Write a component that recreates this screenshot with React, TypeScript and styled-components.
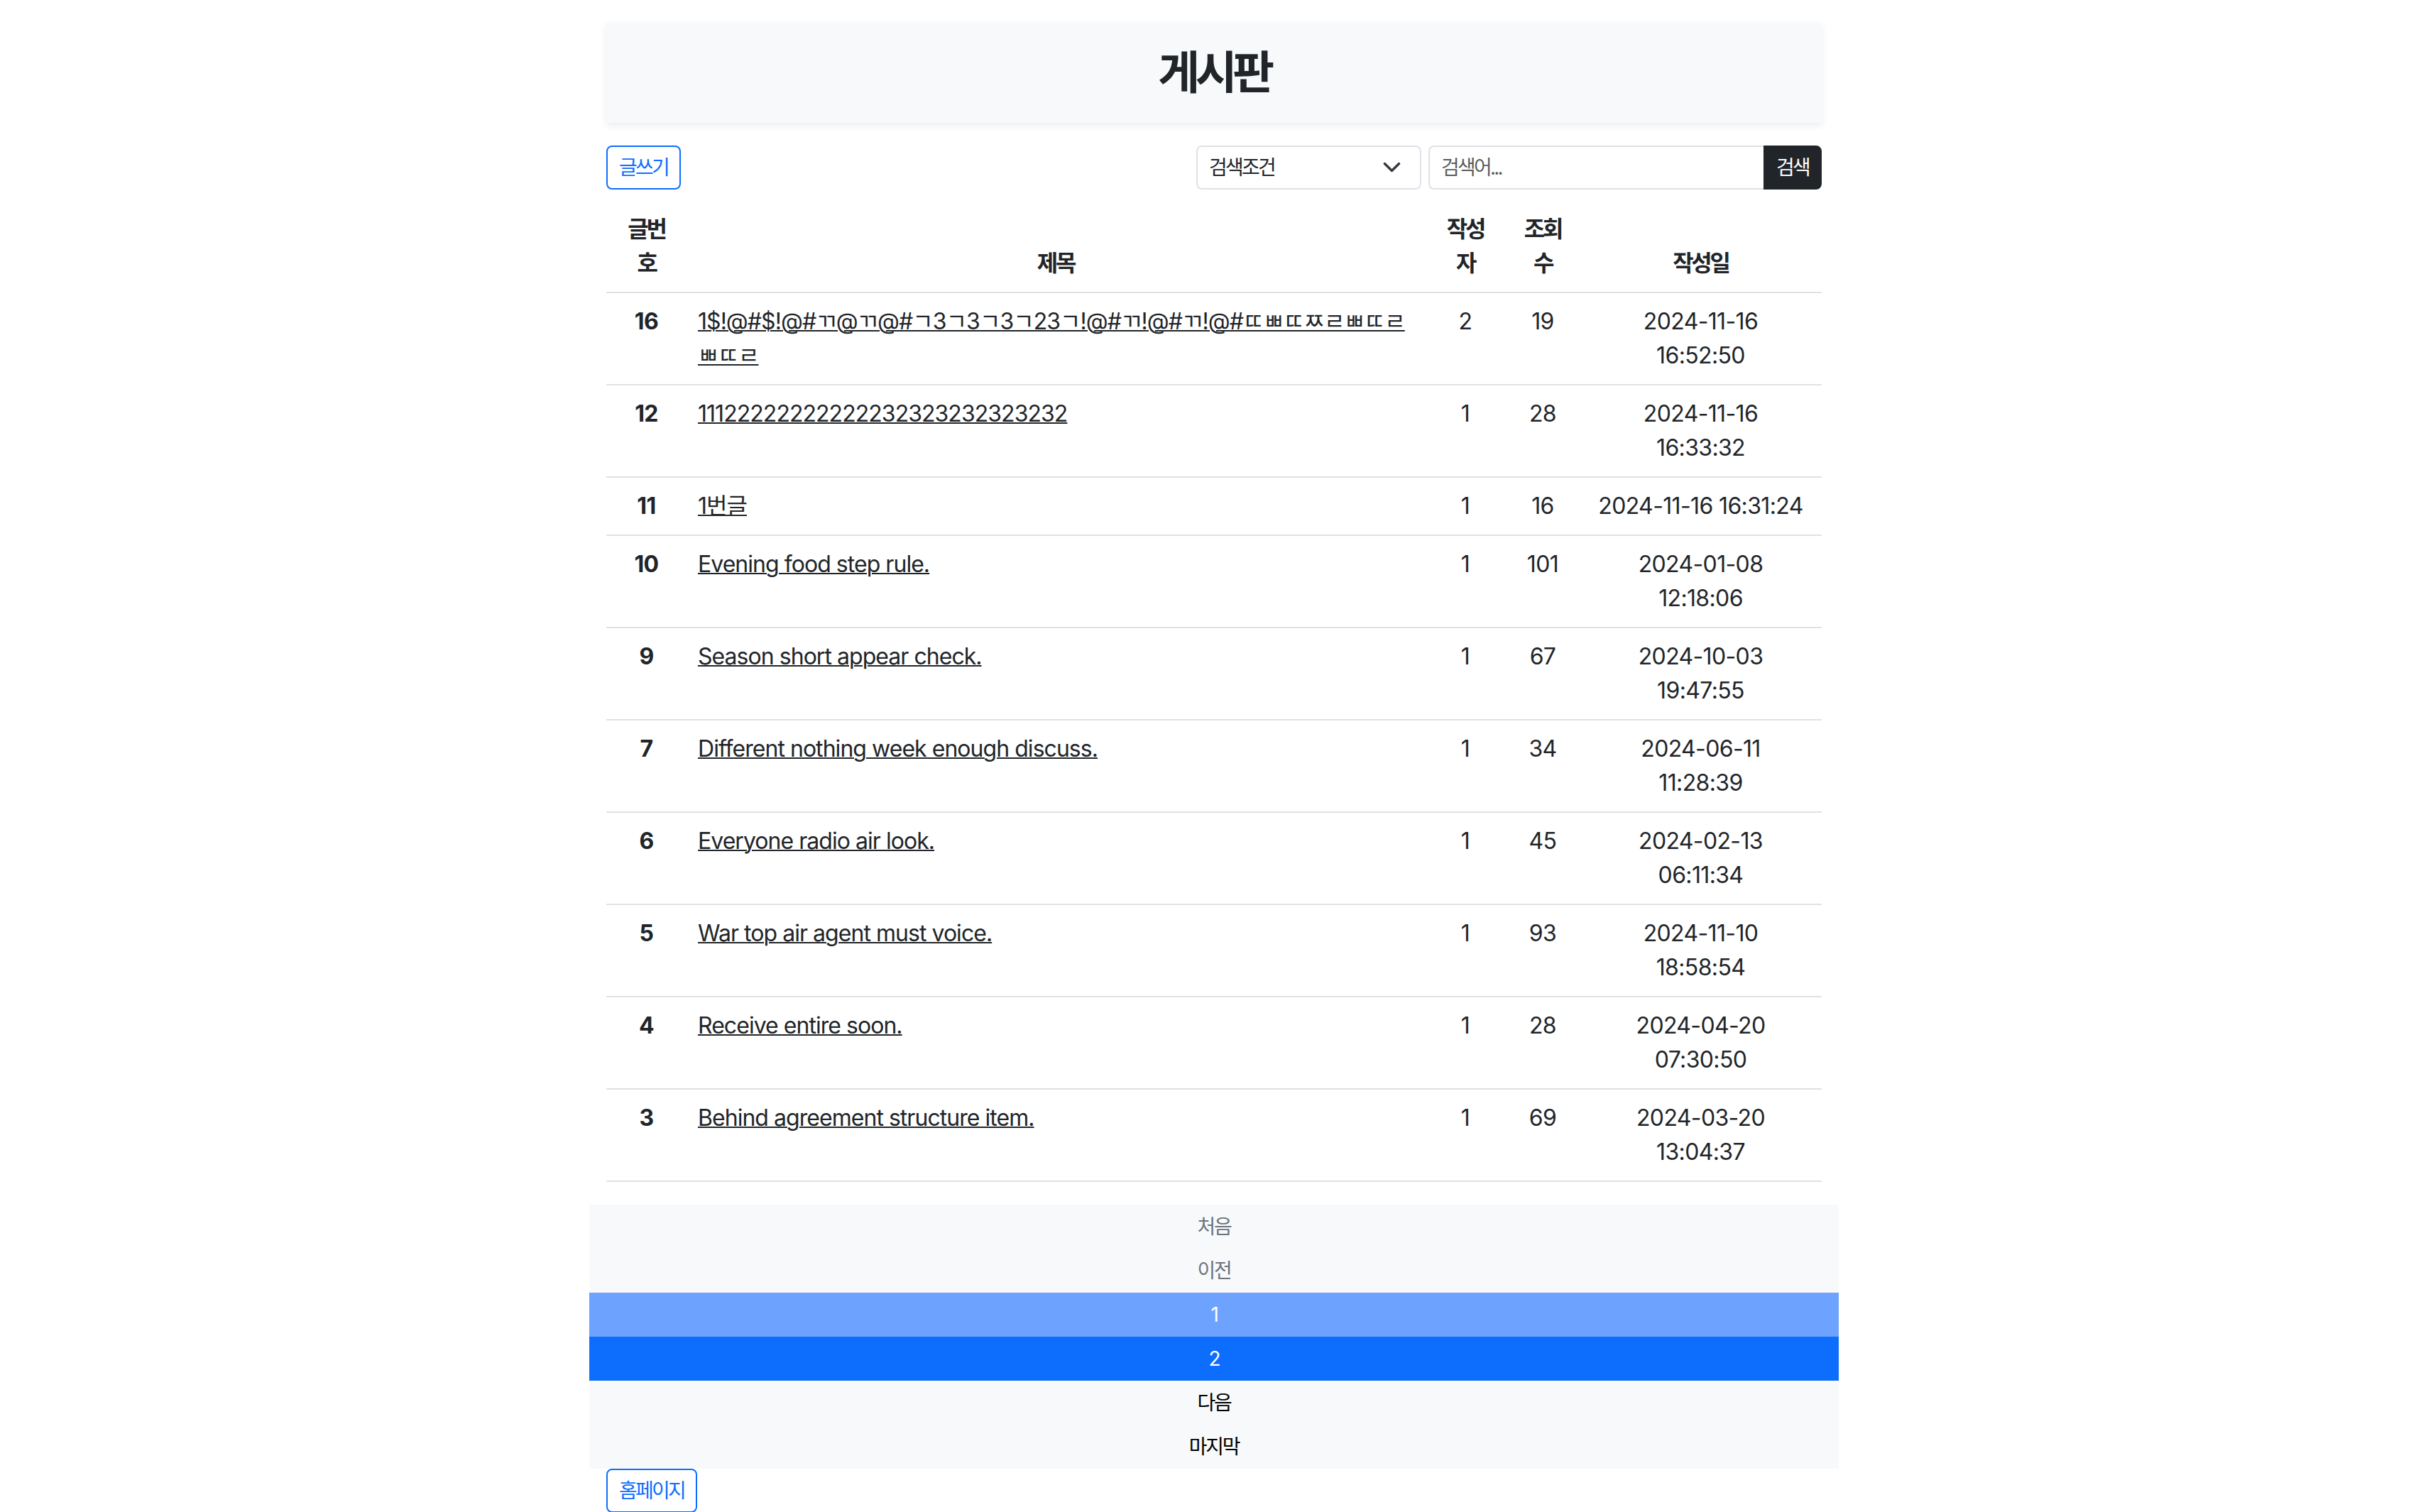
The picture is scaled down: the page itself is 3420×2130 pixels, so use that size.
import styled, { createGlobalStyle } from "styled-components";

interface Post {
    id: number;
    title: string;
    writer: number;
    views: number;
    date: string;
    time: string;
    oneLine?: boolean;
}

const POSTS: Post[] = [
    { id: 16, title: "1$!@#$!@#ㄲ@ㄲ@#ㄱ3ㄱ3ㄱ3ㄱ23ㄱ!@#ㄲ!@#ㄲ!@#ㄸㅃㄸㅉㄹㅃㄸㄹㅃㄸㄹ", writer: 2, views: 19, date: "2024-11-16", time: "16:52:50" },
    { id: 12, title: "11122222222222232323232323232", writer: 1, views: 28, date: "2024-11-16", time: "16:33:32" },
    { id: 11, title: "1번글", writer: 1, views: 16, date: "2024-11-16", time: "16:31:24", oneLine: true },
    { id: 10, title: "Evening food step rule.", writer: 1, views: 101, date: "2024-01-08", time: "12:18:06" },
    { id: 9, title: "Season short appear check.", writer: 1, views: 67, date: "2024-10-03", time: "19:47:55" },
    { id: 7, title: "Different nothing week enough discuss.", writer: 1, views: 34, date: "2024-06-11", time: "11:28:39" },
    { id: 6, title: "Everyone radio air look.", writer: 1, views: 45, date: "2024-02-13", time: "06:11:34" },
    { id: 5, title: "War top air agent must voice.", writer: 1, views: 93, date: "2024-11-10", time: "18:58:54" },
    { id: 4, title: "Receive entire soon.", writer: 1, views: 28, date: "2024-04-20", time: "07:30:50" },
    { id: 3, title: "Behind agreement structure item.", writer: 1, views: 69, date: "2024-03-20", time: "13:04:37" },
];

const COLUMNS = [
    { lines: ["글번", "호"], width: 113 },
    { lines: ["제목"], width: 1040 },
    { lines: ["작성", "자"], width: 114 },
    { lines: ["조회", "수"], width: 104 },
    { lines: ["작성일"], width: 341 },
];

type PageState = "disabled" | "hover" | "active" | "normal";

const PAGES: { label: string; state: PageState }[] = [
    { label: "처음", state: "disabled" },
    { label: "이전", state: "disabled" },
    { label: "1", state: "hover" },
    { label: "2", state: "active" },
    { label: "다음", state: "normal" },
    { label: "마지막", state: "normal" },
];

const GlobalStyle = createGlobalStyle`
    * {
        box-sizing: border-box;
    }
    body {
        margin: 0;
        background: #ffffff;
        color: #212529;
        font-family: Inter, "Noto Sans CJK KR", sans-serif;
        font-size: 32px;
        line-height: 1.5;
        letter-spacing: -0.02em;
    }
`;

const Container = styled.div`
    width: 1712px;
    margin: 0 auto;
    padding-top: 32px;
`;

const Header = styled.header`
    background: #f8f9fa;
    padding: 32px;
    margin-bottom: 32px;
    text-align: center;
    box-shadow: 0 4px 10px rgba(0, 0, 0, 0.075);
`;

const Title = styled.h2`
    margin: 0;
    font-size: 64px;
    line-height: 1.2;
    font-weight: 700;
    letter-spacing: -0.1em;
`;

const Toolbar = styled.div`
    display: flex;
    justify-content: space-between;
    align-items: stretch;
    height: 62px;
    margin-bottom: 16px;
`;

const OutlineButton = styled.button`
    font-family: inherit;
    font-size: 28px;
    line-height: 42px;
    padding: 8px 16px;
    border: 2px solid #0d6efd;
    border-radius: 8px;
    background: #ffffff;
    color: #0d6efd;
    letter-spacing: -0.1em;
    cursor: pointer;
`;

const SearchForm = styled.form`
    display: flex;
    gap: 10px;
`;

const SelectBox = styled.div`
    width: 317px;
    display: flex;
    align-items: center;
    justify-content: space-between;
    padding: 8px 26px 8px 16px;
    border: 2px solid #dee2e6;
    border-radius: 8px;
    font-size: 28px;
    line-height: 42px;
    letter-spacing: -0.1em;
`;

const InputGroup = styled.div`
    display: flex;
`;

const SearchInput = styled.input`
    width: 472px;
    font-family: inherit;
    font-size: 28px;
    line-height: 42px;
    padding: 8px 16px;
    border: 2px solid #dee2e6;
    border-right: none;
    border-radius: 8px 0 0 8px;
    color: #212529;
    outline: none;
    &::placeholder {
        color: rgba(33, 37, 41, 0.75);
        letter-spacing: -0.1em;
    }
`;

const SearchButton = styled.button`
    font-family: inherit;
    font-size: 28px;
    line-height: 42px;
    padding: 8px 16px;
    border: 2px solid #212529;
    border-radius: 0 8px 8px 0;
    background: #212529;
    color: #ffffff;
    letter-spacing: -0.1em;
`;

const Table = styled.table`
    width: 100%;
    table-layout: fixed;
    border-collapse: collapse;
    margin-bottom: 32px;
`;

const Th = styled.th<{ $width: number }>`
    width: ${(p) => p.$width}px;
    padding: 16px;
    font-weight: 700;
    text-align: center;
    vertical-align: bottom;
    letter-spacing: -0.1em;
    border-bottom: 2px solid #dee2e6;
`;

const Td = styled.td<{ $align?: "left" | "center"; $bold?: boolean }>`
    padding: 16px;
    vertical-align: top;
    text-align: ${(p) => p.$align ?? "center"};
    font-weight: ${(p) => (p.$bold ? 700 : 400)};
    border-bottom: 2px solid #dee2e6;
`;

const TitleLink = styled.a`
    color: #212529;
    text-decoration: underline;
    text-decoration-thickness: 2px;
    letter-spacing: -0.03em;
    word-break: break-all;
`;

const Pagination = styled.ul`
    list-style: none;
    margin: 0 -24px;
    padding: 0;
    background: #f8f9fa;
`;

const PAGE_COLORS: Record<PageState, { bg: string; fg: string }> = {
    disabled: { bg: "#f8f9fa", fg: "#6c757d" },
    hover: { bg: "#6ea2ff", fg: "#ffffff" },
    active: { bg: "#0d6efd", fg: "#ffffff" },
    normal: { bg: "#f8f9fa", fg: "#000000" },
};

const PageItem = styled.li<{ $state: PageState }>`
    height: 62px;
    display: flex;
    align-items: center;
    justify-content: center;
    font-size: 28px;
    letter-spacing: -0.08em;
    background: ${(p) => PAGE_COLORS[p.$state].bg};
    color: ${(p) => PAGE_COLORS[p.$state].fg};
`;

const Chevron = () => (
    <svg width="27" height="27" viewBox="0 0 16 16" fill="none">
        <path d="m2 5 6 6 6-6" stroke="#343a40" strokeWidth="2" strokeLinecap="round" strokeLinejoin="round" />
    </svg>
);

export default function App() {
    return (
        <>
            <GlobalStyle />
            <Container>
                <Header>
                    <Title>게시판</Title>
                </Header>
                <Toolbar>
                    <OutlineButton>글쓰기</OutlineButton>
                    <SearchForm onSubmit={(e) => e.preventDefault()}>
                        <SelectBox>
                            <span>검색조건</span>
                            <Chevron />
                        </SelectBox>
                        <InputGroup>
                            <SearchInput placeholder="검색어..." />
                            <SearchButton type="submit">검색</SearchButton>
                        </InputGroup>
                    </SearchForm>
                </Toolbar>
                <Table>
                    <thead>
                        <tr>
                            {COLUMNS.map((c) => (
                                <Th key={c.lines.join("")} $width={c.width}>
                                    {c.lines.map((l, i) => (
                                        <span key={l}>
                                            {i > 0 && <br />}
                                            {l}
                                        </span>
                                    ))}
                                </Th>
                            ))}
                        </tr>
                    </thead>
                    <tbody>
                        {POSTS.map((p) => (
                            <tr key={p.id}>
                                <Td $bold>{p.id}</Td>
                                <Td $align="left">
                                    <TitleLink href="#">{p.title}</TitleLink>
                                </Td>
                                <Td>{p.writer}</Td>
                                <Td>{p.views}</Td>
                                <Td>
                                    {p.date}
                                    {p.oneLine ? " " : <br />}
                                    {p.time}
                                </Td>
                            </tr>
                        ))}
                    </tbody>
                </Table>
                <Pagination>
                    {PAGES.map((pg) => (
                        <PageItem key={pg.label} $state={pg.state}>
                            {pg.label}
                        </PageItem>
                    ))}
                </Pagination>
                <OutlineButton>홈페이지</OutlineButton>
            </Container>
        </>
    );
}
